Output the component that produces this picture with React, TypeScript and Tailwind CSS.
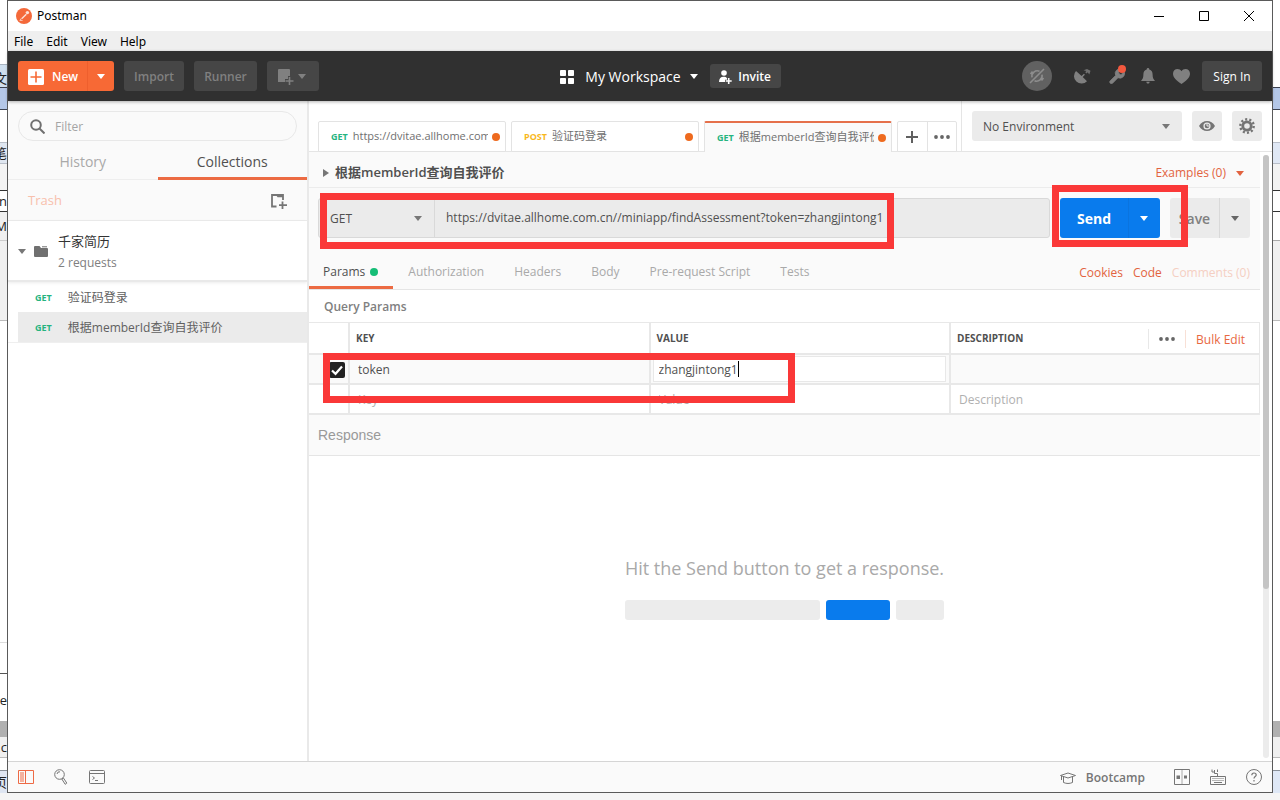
import type { ReactNode } from "react";
import clsx from "clsx";

const LEFT_STRIPS = [
  { cls: "h-[64px] bg-white" },
  { cls: "h-[24px] border-y border-b-[#3c4250] border-t-[#a9b4c0] bg-[#cfdfee] pt-1", text: "文" },
  { cls: "h-[22px] border-b border-[#3c4250] bg-[#b4c7e7]" },
  { cls: "h-[32px] bg-white" },
  { cls: "h-[22px] border-y border-[#b9bfc9] bg-[#dfe6f0]", text: "笔" },
  { cls: "h-[27px] border-b border-[#333] bg-[#f3f3f3]" },
  { cls: "h-[21px] border-b border-[#333] bg-white", text: "n" },
  { cls: "h-[29px] border-b border-[#ccc] bg-[#f0f0f0]", text: "M" },
  { cls: "h-[80px] border-b border-[#bbb] bg-[#f0f0f0]" },
  { cls: "h-[322px] border-b border-[#ddd] bg-white" },
  { cls: "h-[31px] border-b border-[#555] bg-white" },
  { cls: "h-[47px] bg-white pt-1", text: "ge" },
  { cls: "h-[16px] bg-[#b0b0b0]" },
  { cls: "h-[21px] border-b border-[#bbb] bg-[#f0f0f0]", text: "c" },
  { cls: "h-[13px] border-b border-[#8a9099] bg-white" },
  { cls: "flex-1 bg-[#dfe6f2]", text: "页" },
];

const RIGHT_STRIPS = [
  { cls: "h-[88px] border-b border-[#3c4250] bg-white" },
  { cls: "h-[22px] border-b border-[#3c4250] bg-[#b4c7e7]" },
  { cls: "h-[32px] bg-white" },
  { cls: "h-[22px] border-y border-[#b9bfc9] bg-[#e0e8f5]" },
  { cls: "h-[27px] border-b border-[#333] bg-[#f3f3f3]" },
  { cls: "h-[21px] border-b border-[#333] bg-white" },
  { cls: "h-[29px] border-b border-[#aaa] bg-white" },
  { cls: "h-[80px] border-b border-[#bbb] bg-[#f0f0f0]" },
  { cls: "h-[400px] bg-white" },
  { cls: "h-[16px] bg-[#b0b0b0]" },
  { cls: "h-[21px] border-b border-[#bbb] bg-[#f0f0f0]" },
  { cls: "h-[13px] border-b border-[#8a9099] bg-white" },
  { cls: "flex-1 bg-[#dfe8f6]" },
];

interface Strip {
  cls: string;
  text?: string;
}

// Slivers of the windows lying behind this one
function Backdrop({ strips }: { strips: Strip[] }) {
  return (
    <div aria-hidden="true" className="flex w-[7px] shrink-0 flex-col overflow-hidden">
      {strips.map((s, i) => (
        <div
          key={i}
          className={clsx(
            "flex shrink-0 items-center justify-end overflow-hidden whitespace-nowrap text-[13px] leading-4 text-[#222]",
            s.cls,
          )}
        >
          {s.text}
        </div>
      ))}
    </div>
  );
}

function Caret({ className }: { className?: string }) {
  return (
    <svg viewBox="0 0 8 5" className={clsx("h-[5px] w-2 shrink-0", className)} fill="currentColor">
      <path d="M0 0h8L4 5z" />
    </svg>
  );
}

function Dots() {
  return (
    <svg viewBox="0 0 16 4" className="h-1 w-4" fill="#666">
      <circle cx="2" cy="2" r="1.900" />
      <circle cx="8" cy="2" r="1.900" />
      <circle cx="14" cy="2" r="1.900" />
    </svg>
  );
}

function TitleBar() {
  return (
    <div className="flex h-[30px] items-center pl-2 font-['Noto_Sans','Noto_Sans_CJK_SC',sans-serif]">
      <svg viewBox="0 0 16 16" className="mr-[5px] size-4">
        <circle cx="8" cy="8" r="8" fill="#f4693a" />
        <path d="M5.2 10.2l4.6-4.4 1 1-4.4 4.3z" fill="#fde3d9" />
        <circle cx="11.4" cy="4.6" r="1.7" fill="#fde3d9" />
        <path d="M3.6 12.4h3M5.3 10.3l-1 1.8" stroke="#fde3d9" strokeWidth=".8" />
      </svg>
      <h1 className="text-xs text-black">Postman</h1>
      <div className="ml-auto flex items-center gap-[35px] pr-[18px] pb-px">
        <button aria-label="Minimize">
          <svg viewBox="0 0 10 10" className="size-[10px]" stroke="#000">
            <path d="M0 5.5h10" />
          </svg>
        </button>
        <button aria-label="Maximize">
          <svg viewBox="0 0 10 10" className="size-[10px]" stroke="#000" fill="none">
            <path d="M.5.5h9v9h-9z" />
          </svg>
        </button>
        <button aria-label="Close">
          <svg viewBox="0 0 10 10" className="size-[10px]" stroke="#000">
            <path d="M0 0l10 10M10 0L0 10" />
          </svg>
        </button>
      </div>
    </div>
  );
}

function MenuBar() {
  return (
    <nav className="flex h-5 items-center gap-[13px] bg-[#efefef] pt-px pl-[6px] font-['Noto_Sans',sans-serif] text-xs text-black">
      {["File", "Edit", "View", "Help"].map((m) => (
        <button key={m}>{m}</button>
      ))}
    </nav>
  );
}

const darkButton = "flex h-[30px] items-center justify-center rounded-[3px] bg-[#464646] pt-px text-xs";

function Toolbar() {
  return (
    <header className="relative z-10 flex h-[50px] items-center justify-between bg-[#303030] px-[10px] shadow-[0_1px_3px_rgba(0,0,0,0.3)]">
      <div className="flex gap-[10px] font-semibold text-[#808080]">
        <div className="flex h-[30px] overflow-hidden rounded-[3px] bg-[#f76935] text-white">
          <button className="flex w-[69px] items-center gap-2 pt-px pl-[10px] text-xs">
            <svg viewBox="0 0 16 16" className="size-4">
              <rect width="16" height="16" rx="1.5" fill="#fff" />
              <path d="M8 2.5v11M2.500 8h11" stroke="#f76935" strokeWidth="1.6" />
            </svg>
            New
          </button>
          <button aria-label="New options" className="flex w-[27px] items-center justify-center border-l border-[#ee5f2d]">
            <Caret />
          </button>
        </div>
        <button className={clsx(darkButton, "w-[60px]")}>Import</button>
        <button className={clsx(darkButton, "w-[63px]")}>Runner</button>
        <button aria-label="New window" className={clsx(darkButton, "w-[52px] gap-1 pr-1")}>
          <svg viewBox="0 0 17 16" className="h-4 w-[17px]">
            <path d="M2 0h10a1 1 0 0 1 1 1v6h-2v3H8v3H1V1a1 1 0 0 1 1-1z" fill="#808080" />
            <path d="M12.500 8v8M8.500 12h8" stroke="#808080" strokeWidth="1.6" />
          </svg>
          <Caret />
        </button>
      </div>

      <div className="flex items-center text-white">
        <button className="flex items-center pt-px text-sm font-medium">
          <svg viewBox="0 0 14 14" className="mr-[11px] size-[14px]" fill="#fff">
            <rect width="6" height="6" rx=".8" />
            <rect x="8" width="6" height="6" rx=".8" />
            <rect y="8" width="6" height="6" rx=".8" />
            <rect x="8" y="8" width="6" height="6" rx=".8" />
          </svg>
          My Workspace
          <Caret className="mr-3 ml-[9px]" />
        </button>
        <button className="flex h-6 w-[71px] items-center justify-center gap-[6px] rounded-[3px] bg-[#464646] pt-px text-xs font-semibold">
          <svg viewBox="0 0 13 14" className="h-[14px] w-[13px]" fill="#fff">
            <circle cx="5" cy="3" r="2.800" />
            <path d="M0 12c0-3.300 1.800-5.200 4.500-5.200 1.600 0 2.800.5 3.500 1.400v1.600H6v2.200z" />
            <path d="M9.700 8v6M6.700 11h6" stroke="#fff" strokeWidth="1.600" />
          </svg>
          Invite
        </button>
      </div>

      <div className="flex items-center text-[#808080]">
        <button aria-label="Sync off" className="mr-[22px] flex size-[30px] items-center justify-center rounded-full bg-[#616161]">
          <svg viewBox="0 0 16 16" className="size-4" fill="none" stroke="#8d8d8d" strokeWidth="1.6">
            <path d="M10.500 3.300A5.400 5.400 0 0 0 3 9.300M5.500 12.700A5.400 5.400 0 0 0 13 6.700M1 15L15 1M3.500 3.500L1.500 6M12.500 12.500l2-2.500" />
          </svg>
        </button>
        <button aria-label="Interceptor" className="mr-[18px]">
          <svg viewBox="0 0 17 16" className="h-4 w-[17px]" fill="currentColor">
            <path d="M2 3a7.300 7.300 0 0 0 11 10.200L8.700 9l2.200-2.300-1-1L7.600 8z" />
            <path d="M9.500 2.300L13 1l3.500 1.700-1.200 3.800-1.600-2.300-1 1.400-1.500-1.400 1.100-1.100z" opacity=".8" />
          </svg>
        </button>
        <button aria-label="Settings" className="relative mr-4">
          <svg viewBox="2 1 20.500 20.500" className="size-4" fill="currentColor" stroke="currentColor" strokeWidth="1">
            <path d="M14.700 6.300a1 1 0 0 0 0 1.400l1.600 1.600a1 1 0 0 0 1.400 0l3.770-3.770a6 6 0 0 1-7.940 7.940l-6.910 6.910a2.120 2.120 0 0 1-3-3l6.910-6.910a6 6 0 0 1 7.940-7.940l-3.760 3.760z" />
          </svg>
          <span className="absolute -top-[3px] -right-px size-2 rounded-full bg-[#f2583e]" />
        </button>
        <button aria-label="Notifications" className="mr-[18px]">
          <svg viewBox="0 0 14 16" className="h-4 w-[14px]" fill="currentColor">
            <path d="M7 0c.8 0 1.300.6 1.300 1.400C10.600 2 11.600 4 11.600 6.500c0 3 .7 4.500 2.400 6.500H0c1.700-2 2.400-3.500 2.400-6.500C2.400 4 3.400 2 5.700 1.400 5.700.6 6.200 0 7 0zM5.300 13.700h3.400C8.500 15 7.900 15.500 7 15.500S5.500 15 5.300 13.700z" />
          </svg>
        </button>
        <button aria-label="Favorites" className="mr-3">
          <svg viewBox="0 0 17 15" className="h-[15px] w-[17px]" fill="currentColor">
            <path d="M8.500 15C3.500 11.500 0 8.400 0 4.700 0 2 2 0 4.500 0c1.600 0 3.100.8 4 2.200C9.400.8 10.900 0 12.500 0 15 0 17 2 17 4.700c0 3.700-3.500 6.800-8.500 10.300z" />
          </svg>
        </button>
        <button className={clsx(darkButton, "w-[60px] font-medium text-white")}>Sign In</button>
      </div>
    </header>
  );
}

function RequestRow({ name, active }: { name: string; active?: boolean }) {
  return (
    <li className="pl-[10px]">
      <a
        href="#"
        className={clsx("flex h-[30px] items-center gap-4 pt-[2px] pl-[17px] text-xs text-[#606060]", active && "bg-[#ebebeb]")}
      >
        <span className="text-[9px] font-bold text-[#26b47f]">GET</span>
        {name}
      </a>
    </li>
  );
}

function Sidebar() {
  return (
    <aside className="flex w-[299px] shrink-0 flex-col bg-white">
      <div className="bg-[#fafafa] px-[10px] pt-[10px]">
        <label className="flex h-[30px] items-center rounded-full border border-[#e8e8e8] pl-[11px]">
          <svg viewBox="0 0 15 15" className="mr-[10px] size-[15px]" fill="none" stroke="#707070" strokeWidth="2">
            <circle cx="6" cy="6" r="4.800" />
            <path d="M9.500 9.500l5 5" />
          </svg>
          <input
            aria-label="Filter"
            placeholder="Filter"
            className="min-w-0 flex-1 bg-transparent pt-[2px] text-xs outline-none placeholder:text-[#a5a5a5]"
          />
        </label>
      </div>
      <div role="tablist" className="flex h-[39px] border-b border-[#eee] bg-[#fafafa] text-sm">
        <button role="tab" className="flex-1 pt-[3px] text-[#a9a9a9]">
          History
        </button>
        <button role="tab" aria-selected="true" className="-mb-px flex-1 border-b-[3px] border-[#ec6b43] pt-[5px] text-[#505050]">
          Collections
        </button>
      </div>
      <div className="flex h-[41px] items-center justify-between border-b border-[#ececec] bg-[#fafafa] pt-[2px] pr-5 pl-5">
        <button className="text-[13px] text-[#f8c0ac]">Trash</button>
        <button aria-label="New collection">
          <svg viewBox="0 0 17 16" className="h-4 w-[17px]" fill="none" stroke="#757575" strokeWidth="1.800">
            <path d="M6.500 13.500H2V2h5l1 1.300h5V7M2 2h11v2" />
            <path d="M12.500 8.500V16M9 12.200h8" />
          </svg>
        </button>
      </div>
      <div className="flex h-[61px] items-center border-b-2 border-[#e9e9e9] pl-[10px] shadow-[0_1px_3px_rgba(0,0,0,0.08)]">
        <Caret className="mt-px mr-2 text-[#777]" />
        <svg viewBox="0 0 14 11" className="mt-px mr-[10px] h-[11px] w-[14px]" fill="#707070">
          <path d="M1 0h4.500L7 2h6a1 1 0 0 1 1 1v7a1 1 0 0 1-1 1H1a1 1 0 0 1-1-1V1a1 1 0 0 1 1-1z" />
          <path d="M8 .3h5v1H8z" />
        </svg>
        <div className="pt-[3px]">
          <p className="text-[13px] leading-[21px] text-[#333]">千家简历</p>
          <p className="text-xs leading-[21px] text-[#808080]">2 requests</p>
        </div>
      </div>
      <ul className="border-b border-[#efefef]">
        <RequestRow name="验证码登录" />
        <RequestRow name="根据memberId查询自我评价" active />
      </ul>
    </aside>
  );
}

interface RequestTabProps {
  method: "GET" | "POST";
  name: string;
  active?: boolean;
}

function RequestTab({ method, name, active }: RequestTabProps) {
  return (
    <button
      role="tab"
      aria-selected={!!active}
      className={clsx(
        "flex h-[31px] w-[188px] items-center rounded-t-[2px] border-x border-t border-[#e3e3e3] pr-[5px] pl-3 text-[11px] text-[#707070]",
        active ? "border-t-2 border-t-[#e5704b] bg-[#fafafa]" : "border-b bg-white",
      )}
    >
      <span className={clsx("mr-[5px] text-[9px] font-bold", method === "GET" ? "text-[#26b47f]" : "text-[#f8b81d]")}>
        {method}
      </span>
      <span className="mr-1 min-w-0 flex-1 overflow-hidden text-left whitespace-nowrap">{name}</span>
      <span className="size-2 shrink-0 rounded-full bg-[#ee6a1e]" />
    </button>
  );
}

function TabStrip() {
  return (
    <div className="flex h-[51px] border-b border-[#e5e5e5]">
      <div role="tablist" className="-mb-px flex min-w-0 flex-1 items-end gap-[5px] overflow-hidden pl-[9px]">
        <RequestTab method="GET" name="https://dvitae.allhome.com.cn" />
        <RequestTab method="POST" name="验证码登录" />
        <RequestTab method="GET" name="根据memberId查询自我评价" active />
        <div className="flex h-[31px] w-[60px] rounded-t-[2px] border border-[#e3e3e3] bg-white">
          <button aria-label="New tab" className="flex flex-1 items-center justify-center border-r border-[#e3e3e3]">
            <svg viewBox="0 0 12 12" className="size-3" stroke="#606060" strokeWidth="2">
              <path d="M6 0v12M0 6h12" />
            </svg>
          </button>
          <button aria-label="Tab options" className="flex flex-1 items-center justify-center">
            <Dots />
          </button>
        </div>
      </div>
      <div className="flex gap-[10px] border-l border-[#e5e5e5] p-[10px]">
        <div className="relative">
          <select
            aria-label="Environment"
            className="h-[30px] w-[210px] appearance-none rounded-[3px] bg-[#ebebeb] pt-[2px] pl-[11px] text-xs text-[#505050]"
          >
            <option>No Environment</option>
          </select>
          <Caret className="pointer-events-none absolute top-[13px] right-3 text-[#777]" />
        </div>
        <button aria-label="Environment quick look" className="flex size-[30px] items-center justify-center rounded-[3px] bg-[#ebebeb]">
          <svg viewBox="0 0 16 10" className="h-[10px] w-4">
            <path d="M0 5C2 1.700 4.700 0 8 0s6 1.700 8 5c-2 3.300-4.700 5-8 5S2 8.300 0 5z" fill="#757575" />
            <circle cx="8" cy="5" r="3.600" fill="#ebebeb" />
            <circle cx="8" cy="5" r="2.300" fill="#757575" />
            <path d="M8 3v2h2" stroke="#ebebeb" fill="none" />
          </svg>
        </button>
        <button aria-label="Manage environments" className="flex size-[30px] items-center justify-center rounded-[3px] bg-[#ebebeb]">
          <svg viewBox="0 0 16 16" className="size-4" fill="none" stroke="#757575">
            <circle cx="8" cy="8" r="4.200" strokeWidth="2.800" />
            <circle cx="8" cy="8" r="6.700" strokeWidth="2.400" strokeDasharray="2.100 2.110" />
          </svg>
        </button>
      </div>
    </div>
  );
}

// Red marker frame drawn over part of a row
function Marker({ className }: { className: string }) {
  return <div className={clsx("pointer-events-none absolute z-10 border-[7px] border-[#fa3838]", className)} />;
}

function UrlRow() {
  return (
    <div className="relative flex h-[60px] items-center gap-[10px] pr-[10px] pl-[9px]">
      <div className="flex h-10 min-w-0 flex-1 rounded-[3px] border border-[#d9d9d9] bg-[#ebebeb] text-xs text-[#505050]">
        <div className="relative">
          <select aria-label="Method" className="h-full w-[116px] appearance-none border-r border-[#d9d9d9] pt-[2px] pl-[11px]">
            <option>GET</option>
          </select>
          <Caret className="pointer-events-none absolute top-[17px] right-[13px] text-[#777]" />
        </div>
        <input
          aria-label="Request URL"
          defaultValue="https://dvitae.allhome.com.cn//miniapp/findAssessment?token=zhangjintong1"
          className="min-w-0 flex-1 bg-transparent pl-[11px] outline-none"
        />
      </div>
      <div className="flex h-10 w-[100px] rounded-[3px] bg-[#097bed] text-white">
        <button className="flex-1 pt-px text-sm font-bold">Send</button>
        <button aria-label="Send options" className="flex w-8 items-center justify-center border-l border-[#0a74df] pr-px">
          <Caret />
        </button>
      </div>
      <div className="flex h-10 w-20 rounded-[3px] bg-[#ebebeb] text-[#808080]">
        <button className="flex-1 pt-px text-sm font-semibold">Save</button>
        <button aria-label="Save options" className="flex w-[31px] items-center justify-center border-l border-[#d9d9d9] pr-px text-[#666]">
          <Caret />
        </button>
      </div>
      <Marker className="top-[5px] left-[11px] h-[56px] w-[574px]" />
      <Marker className="-top-[3px] right-[72px] h-[62px] w-[136px]" />
    </div>
  );
}

function RequestSections() {
  return (
    <div className="flex h-[42px] items-stretch justify-between border-b border-[#e5e5e5] pr-[10px] text-xs">
      <div role="tablist" className="flex text-[#a9a9a9]">
        <button
          role="tab"
          aria-selected="true"
          className="mr-[15px] flex items-center gap-[5px] border-b-[3px] border-[#ec6b43] pt-[10px] pr-[15px] pl-[14px] text-[#505050]"
        >
          Params
          <span className="size-2 rounded-full bg-[#15bd76]" />
        </button>
        <div className="flex gap-[30px] pt-[7px]">
          {["Authorization", "Headers", "Body", "Pre-request Script", "Tests"].map((t) => (
            <button key={t} role="tab">
              {t}
            </button>
          ))}
        </div>
      </div>
      <div className="flex items-center gap-[10px] pt-[9px] text-[#e26340]">
        <a href="#">Cookies</a>
        <a href="#">Code</a>
        <a href="#" className="text-[#f5cfc2]">
          Comments (0)
        </a>
      </div>
    </div>
  );
}

function HeadCell({ children }: { children?: ReactNode }) {
  return <th className="border-b-2 border-l-2 border-[#e8e8e8] pt-px pl-[6px] text-left font-bold">{children}</th>;
}

const bodyCell = "border-b-2 border-l-2 border-[#e8e8e8]";
const cellInput = "w-full bg-transparent pt-[2px] pl-2 outline-none placeholder:text-[#b0b0b0]";

function ParamsTable() {
  return (
    <div className="relative">
      <table className="w-full table-fixed border-separate border-spacing-0 border-t border-r border-[#e8e8e8] text-xs text-[#505050]">
        <colgroup>
          <col className="w-[39px]" />
          <col />
          <col />
          <col className="w-[310px]" />
        </colgroup>
        <thead>
          <tr className="h-8 text-[10px]">
            <th aria-label="Enabled" className="border-b-2 border-[#e8e8e8]" />
            <HeadCell>KEY</HeadCell>
            <HeadCell>VALUE</HeadCell>
            <HeadCell>
              <div className="flex items-center">
                DESCRIPTION
                <div className="ml-auto flex items-center pr-[14px] text-xs font-normal">
                  <button aria-label="Columns" className="flex h-5 items-center border-l border-[#e8e8e8] px-[10px]">
                    <Dots />
                  </button>
                  <button className="border-l border-[#f8e0d6] pt-[2px] pl-[10px] text-[#e8683f]">Bulk Edit</button>
                </div>
              </div>
            </HeadCell>
          </tr>
        </thead>
        <tbody>
          <tr className="h-[30px] bg-[#fafafa]">
            <td className="border-b-2 border-[#e8e8e8] pt-[2px]">
              <label className="relative ml-5 flex size-4">
                <input type="checkbox" aria-label="Enable token" defaultChecked className="size-4 appearance-none rounded-[2px] bg-[#222]" />
                <svg viewBox="0 0 16 16" className="pointer-events-none absolute inset-0 size-4" fill="none" stroke="#fff" strokeWidth="2.200">
                  <path d="M3 8.500l3.500 3.300L13 4.500" />
                </svg>
              </label>
            </td>
            <td className={bodyCell}>
              <input aria-label="Key" defaultValue="token" className={cellInput} />
            </td>
            <td className={bodyCell}>
              <div className="mr-[3px] ml-[2px] flex h-[26px] items-center border border-[#e8e8e8] bg-white pl-[5px]">
                <input
                  aria-label="Value"
                  defaultValue="zhangjintong1"
                  className="min-w-0 [field-sizing:content] bg-transparent pt-px outline-none"
                />
                <span className="h-4 w-px bg-black" />
              </div>
            </td>
            <td className={bodyCell}>
              <input aria-label="Description" className={cellInput} />
            </td>
          </tr>
          <tr className="h-[30px] bg-white">
            <td className="border-b-2 border-[#e8e8e8]" />
            <td className={bodyCell}>
              <input aria-label="New key" placeholder="Key" className={cellInput} />
            </td>
            <td className={bodyCell}>
              <input aria-label="New value" placeholder="Value" className={cellInput} />
            </td>
            <td className={bodyCell}>
              <input aria-label="New description" placeholder="Description" className={cellInput} />
            </td>
          </tr>
        </tbody>
      </table>
      <Marker className="top-[31px] left-[14px] h-[50px] w-[472px]" />
    </div>
  );
}

function Workspace() {
  return (
    <main className="flex min-w-0 flex-1 flex-col border-l-2 border-[#e9e9e9] bg-white">
      <TabStrip />
      <div className="flex flex-1">
        <div className="flex min-w-0 flex-1 flex-col">
          <div className="bg-[#fafafa]">
            <div className="flex h-9 items-center justify-between border-b border-[#ececec] pt-[7px] pr-4 pl-[14px]">
              <h2 className="flex items-center gap-[6px] text-[13px] font-semibold text-[#505050]">
                <svg viewBox="0 0 6 8" className="h-2 w-[6px]" fill="#777">
                  <path d="M0 0l6 4-6 4z" />
                </svg>
                根据memberId查询自我评价
              </h2>
              <button className="flex items-center gap-[10px] text-xs text-[#e26340]">
                Examples (0)
                <Caret />
              </button>
            </div>
            <UrlRow />
            <RequestSections />
          </div>
          <h3 className="flex h-8 items-center pt-[2px] pl-[15px] text-xs font-semibold text-[#808080]">Query Params</h3>
          <ParamsTable />
          <h3 className="flex h-[41px] items-center border-b border-[#e5e5e5] bg-[#fafafa] pl-[9px] font-['Liberation_Sans',sans-serif] text-sm text-[#999]">
            Response
          </h3>
          <div className="flex flex-col items-center gap-[19px] pt-[99px]">
            <p className="text-lg leading-[26px] text-[#a9a9a9]">Hit the Send button to get a response.</p>
            <div aria-hidden="true" className="flex h-5 gap-[6px]">
              <span className="w-[195px] rounded-[3px] bg-[#ececec]" />
              <span className="w-16 rounded-[3px] bg-[#097bed]" />
              <span className="w-12 rounded-[3px] bg-[#ececec]" />
            </div>
          </div>
        </div>
        <div aria-hidden="true" className="w-3 p-[3px]">
          <div className="h-full rounded-full bg-[#ececec]">
            <div className="h-[72%] rounded-full bg-[#c5c5c5]" />
          </div>
        </div>
      </div>
    </main>
  );
}

function StatusBar() {
  return (
    <footer className="flex h-[31px] items-center justify-between border-t border-[#d5d5d5] bg-[#fafafa] px-[10px] text-[#757575]">
      <div className="flex items-center gap-5">
        <button aria-label="Toggle sidebar">
          <svg viewBox="0 0 16 14" className="h-[14px] w-4" fill="none" stroke="#ee6a45">
            <path d="M.5.5h15v13H.5zM7.500 0v14M2 3h4M2 5h4M2 7h4M2 9h4M2 11h4" />
          </svg>
        </button>
        <button aria-label="Find">
          <svg viewBox="0 0 14 16" className="h-4 w-[14px]" fill="none" stroke="currentColor">
            <circle cx="5.500" cy="5.500" r="4.800" />
            <path d="M3 5a2.600 2.600 0 0 1 3-2.200" />
            <path d="M7.800 10l1.700-.9 3.300 5-1.600 1.200z" />
          </svg>
        </button>
        <button aria-label="Console">
          <svg viewBox="0 0 16 14" className="ml-px h-[14px] w-4" fill="none" stroke="currentColor">
            <rect x=".5" y=".5" width="15" height="13" rx="1" />
            <path d="M0 3.500h16M3.500 6.500L5.500 8l-2 1.500M6 10.500h3" />
          </svg>
        </button>
      </div>
      <div className="flex items-center">
        <button className="mr-[29px] flex items-center gap-[10px] pt-px text-xs font-semibold">
          <svg viewBox="0 0 16 12" className="h-3 w-4" fill="none" stroke="currentColor">
            <path d="M.5 3.500L8 1l7.500 2.500L8 6zM3.500 5v5.500c3 1.300 6 1.300 9 0V5M1.500 4v4" />
          </svg>
          Bootcamp
        </button>
        <button aria-label="Two pane view" className="mr-5">
          <svg viewBox="0 0 16 16" className="size-4" fill="none" stroke="currentColor">
            <path d="M.5.500h15v15H.5z" />
            <path d="M8 0v16" strokeOpacity=".6" />
            <path d="M2.500 6.500H6v3.500H2.500zM10 6.500h3v3h-3z" fill="currentColor" stroke="none" />
          </svg>
        </button>
        <button aria-label="Keyboard shortcuts" className="mr-5">
          <svg viewBox="0 0 16 16" className="size-4" fill="none" stroke="currentColor">
            <path d="M.5 7.500h15v8H.5z" />
            <path d="M2.500 9.500h11M2.500 11.500h11" strokeDasharray="1 1" />
            <path d="M4 13.500h8M7.500 7V4.500h-3V1M2 .500v2.500h2.500M7.500 3V.5" />
          </svg>
        </button>
        <button aria-label="Help">
          <svg viewBox="0 0 16 16" className="size-4" fill="none" stroke="currentColor">
            <circle cx="8" cy="8" r="7.500" />
            <path d="M5.800 6.300C5.800 4.800 6.700 4 8 4s2.200.8 2.200 2c0 1.500-2.200 1.700-2.200 3.500M8 11v1.400" strokeWidth="1.200" />
          </svg>
        </button>
      </div>
    </footer>
  );
}

export default function App() {
  return (
    <div className="flex min-h-screen flex-col bg-[#f5f5f5] pb-[7px] font-['Open_Sans','Noto_Sans_CJK_SC',sans-serif]">
      <div className="flex flex-1">
        <Backdrop strips={LEFT_STRIPS} />
        <div className="flex min-w-0 flex-1 flex-col border border-[#5a5a5a] bg-white">
          <TitleBar />
          <MenuBar />
          <Toolbar />
          <div className="flex flex-1">
            <Sidebar />
            <Workspace />
          </div>
          <StatusBar />
        </div>
        <Backdrop strips={RIGHT_STRIPS} />
      </div>
    </div>
  );
}
